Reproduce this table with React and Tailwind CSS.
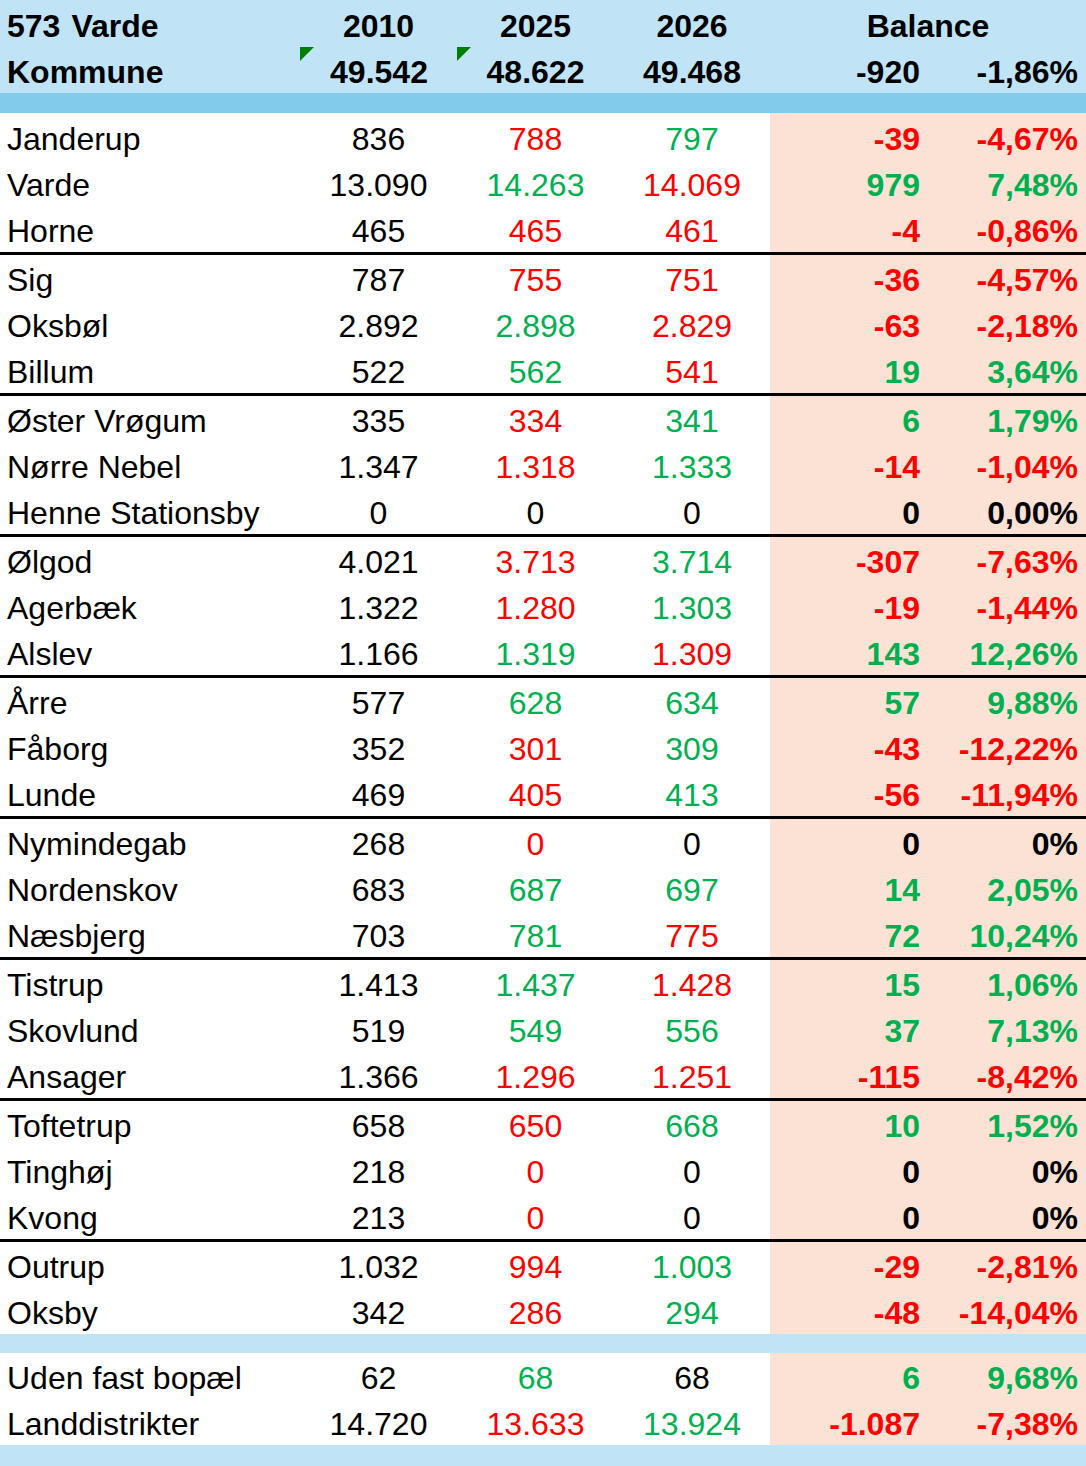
const R = "text-[#ff0000]";
const G = "text-[#00b050]";
const K = "text-black";

// [name, 2010, 2025, c2025, 2026, c2026, balance, pct, cBal]
const groups = [
  [
    ["Janderup", "836", "788", R, "797", G, "-39", "-4,67%", R],
    ["Varde", "13.090", "14.263", G, "14.069", R, "979", "7,48%", G],
    ["Horne", "465", "465", R, "461", R, "-4", "-0,86%", R],
  ],
  [
    ["Sig", "787", "755", R, "751", R, "-36", "-4,57%", R],
    ["Oksbøl", "2.892", "2.898", G, "2.829", R, "-63", "-2,18%", R],
    ["Billum", "522", "562", G, "541", R, "19", "3,64%", G],
  ],
  [
    ["Øster Vrøgum", "335", "334", R, "341", G, "6", "1,79%", G],
    ["Nørre Nebel", "1.347", "1.318", R, "1.333", G, "-14", "-1,04%", R],
    ["Henne Stationsby", "0", "0", K, "0", K, "0", "0,00%", K],
  ],
  [
    ["Ølgod", "4.021", "3.713", R, "3.714", G, "-307", "-7,63%", R],
    ["Agerbæk", "1.322", "1.280", R, "1.303", G, "-19", "-1,44%", R],
    ["Alslev", "1.166", "1.319", G, "1.309", R, "143", "12,26%", G],
  ],
  [
    ["Årre", "577", "628", G, "634", G, "57", "9,88%", G],
    ["Fåborg", "352", "301", R, "309", G, "-43", "-12,22%", R],
    ["Lunde", "469", "405", R, "413", G, "-56", "-11,94%", R],
  ],
  [
    ["Nymindegab", "268", "0", R, "0", K, "0", "0%", K],
    ["Nordenskov", "683", "687", G, "697", G, "14", "2,05%", G],
    ["Næsbjerg", "703", "781", G, "775", R, "72", "10,24%", G],
  ],
  [
    ["Tistrup", "1.413", "1.437", G, "1.428", R, "15", "1,06%", G],
    ["Skovlund", "519", "549", G, "556", G, "37", "7,13%", G],
    ["Ansager", "1.366", "1.296", R, "1.251", R, "-115", "-8,42%", R],
  ],
  [
    ["Toftetrup", "658", "650", R, "668", G, "10", "1,52%", G],
    ["Tinghøj", "218", "0", R, "0", K, "0", "0%", K],
    ["Kvong", "213", "0", R, "0", K, "0", "0%", K],
  ],
  [
    ["Outrup", "1.032", "994", R, "1.003", G, "-29", "-2,81%", R],
    ["Oksby", "342", "286", R, "294", G, "-48", "-14,04%", R],
  ],
];

const extra = [
  ["Uden fast bopæl", "62", "68", G, "68", K, "6", "9,68%", G],
  ["Landdistrikter", "14.720", "13.633", R, "13.924", G, "-1.087", "-7,38%", R],
];

const cols = "grid grid-cols-[300px_157px_157px_156px_158px_158px]";

function Row({ r, h = "h-[46px]" }) {
  const [name, a, b, cb, c, cc, bal, pct, cbal] = r;
  return (
    <div className={`${cols} ${h} leading-none`}>
      <div className="flex items-center pt-[4px] pl-[7px] text-[32px] text-black">{name}</div>
      <div className="flex items-center justify-center pt-[4px] text-[32px] text-black">{a}</div>
      <div className={`flex items-center justify-center pt-[4px] text-[32px] ${cb}`}>{b}</div>
      <div className={`flex items-center justify-center pt-[4px] text-[32px] ${cc}`}>{c}</div>
      <div className={`flex items-center justify-end pt-[4px] pr-[8px] bg-[#fbe2d5] text-[32px] font-bold ${cbal}`}>{bal}</div>
      <div className={`flex items-center justify-end pt-[4px] pr-[8px] bg-[#fbe2d5] text-[32px] font-bold ${cbal}`}>{pct}</div>
    </div>
  );
}

function Corner() {
  return (
    <span className="absolute left-0 top-[1px] w-0 h-0 border-t-[14px] border-t-[#008000] border-r-[14px] border-r-transparent" />
  );
}

export default function App() {
  return (
    <div className="w-[1086px] h-[1466px] overflow-hidden bg-white font-['Liberation_Sans',Arial,sans-serif] text-black">
      {/* Header */}
      <div className="bg-[#c0e4f5] font-bold text-[32px] leading-none">
        <div className={`${cols} h-[46px]`}>
          <div className="flex items-center pt-[5px] pl-[7px]">
            573<span className="ml-[11px]">Varde</span>
          </div>
          <div className="flex items-center justify-center pt-[5px]">2010</div>
          <div className="flex items-center justify-center pt-[5px]">2025</div>
          <div className="flex items-center justify-center pt-[5px]">2026</div>
          <div className="col-span-2 flex items-center justify-center pt-[5px]">Balance</div>
        </div>
        <div className={`${cols} h-[47px]`}>
          <div className="flex items-center pt-[5px] pl-[7px]">Kommune</div>
          <div className="relative flex items-center justify-center pt-[5px] pl-[1px]">
            <Corner />
            49.542
          </div>
          <div className="relative flex items-center justify-center pt-[5px]">
            <Corner />
            48.622
          </div>
          <div className="flex items-center justify-center pt-[5px]">49.468</div>
          <div className="flex items-center justify-end pt-[5px] pr-[8px]">-920</div>
          <div className="flex items-center justify-end pt-[5px] pr-[8px]">-1,86%</div>
        </div>
      </div>
      <div className="h-[20px] bg-[#83cbeb]" />

      {/* Village groups */}
      {groups.map((g, gi) => (
        <div key={gi} className={gi > 0 ? "border-t-[3px] border-black" : ""}>
          {g.map((r, ri) => (
            <Row key={ri} r={r} h={gi === 0 && ri === 0 ? "h-[47px]" : "h-[46px]"} />
          ))}
        </div>
      ))}

      <div className="h-[19px] bg-[#c0e4f5]" />
      {extra.map((r, i) => (
        <Row key={i} r={r} />
      ))}
      <div className="h-[23px] bg-[#c0e4f5]" />
    </div>
  );
}
